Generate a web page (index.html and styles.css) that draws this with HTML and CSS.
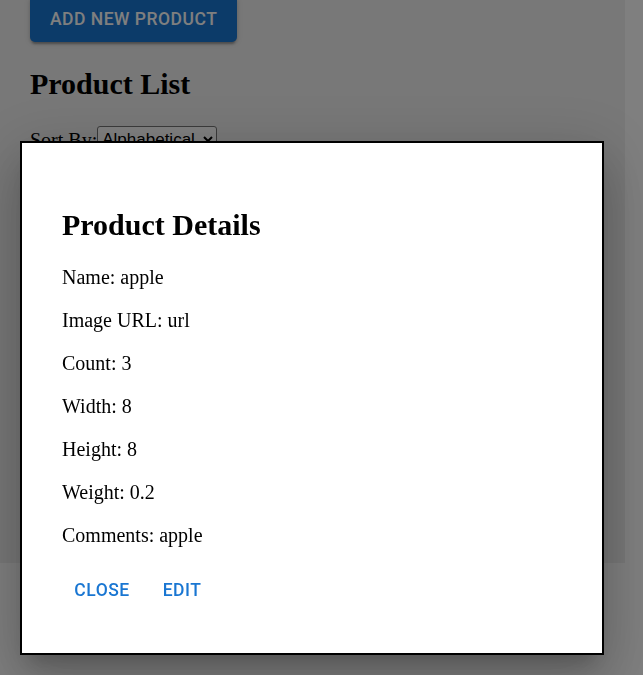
FILE: index.html
```html
<!DOCTYPE html>
<html lang="en">
<head>
<meta charset="utf-8">
<title>Products</title>
<link rel="stylesheet" href="styles.css">
</head>
<body>
  <div class="app">
    <div class="toolbar">
      <button class="btn-contained">Add New Product</button>
    </div>
    <h2 class="title">Product List</h2>
    <div class="sort">
      <label class="sort-label" for="sort">Sort By:</label><select id="sort" class="sort-select"><option>Alphabetical</option><option>Count</option></select>
    </div>
  </div>

  <div class="backdrop"></div>
  <div class="modal">
    <h2 class="modal-title">Product Details</h2>
    <p class="field">Name: apple</p>
    <p class="field">Image URL: url</p>
    <p class="field">Count: 3</p>
    <p class="field">Width: 8</p>
    <p class="field">Height: 8</p>
    <p class="field">Weight: 0.2</p>
    <p class="field">Comments: apple</p>
    <div class="actions">
      <button class="btn-text">Close</button>
      <button class="btn-text">Edit</button>
    </div>
  </div>
</body>
</html>
```

FILE: styles.css
```css
html, body {
  margin: 0;
  padding: 0;
  background: #ffffff;
}

body {
  font-family: "Liberation Serif", "Times New Roman", serif;
  font-size: 20px;
  color: #000;
  overflow: hidden;
  height: 675px;
}

.app {
  width: 625px;
  height: 563px;
  box-sizing: border-box;
  padding: 0 30px;
  background: #f0f0f0;
  overflow: hidden;
}

.toolbar {
  display: flex;
  margin-top: -4px;
}

.btn-contained {
  display: inline-flex;
  align-items: center;
  justify-content: center;
  box-sizing: border-box;
  height: 45.6px;
  padding: 0 20px;
  border: 0;
  border-radius: 5px;
  background: #1976d2;
  color: #fff;
  font-family: Roboto, "Liberation Sans", sans-serif;
  font-weight: 500;
  font-size: 17.5px;
  letter-spacing: 0.5px;
  text-transform: uppercase;
  box-shadow: 0 4px 2px -2px rgba(0,0,0,0.2), 0 2px 3px 0 rgba(0,0,0,0.14), 0 1px 6px 0 rgba(0,0,0,0.12);
}

.title {
  font-size: 30px;
  font-weight: bold;
  margin: 25px 0;
}

.sort {
  display: flex;
  align-items: flex-start;
}

.sort-label {
  line-height: 23px;
  margin-top: 3px;
}

.sort-select {
  font-family: "Liberation Sans", Arial, sans-serif;
  font-size: 17px;
  height: 27px;
  width: 120px;
  margin: 0;
  border: 1px solid #767676;
  border-radius: 3px;
  background: #fff;
  color: #000;
}

.backdrop {
  position: fixed;
  inset: 0;
  background: rgba(0, 0, 0, 0.5);
}

.modal {
  position: fixed;
  left: 20px;
  top: 141px;
  width: 584px;
  box-sizing: border-box;
  padding: 40px;
  background: #fff;
  border: 2px solid #000;
  box-shadow: 0 14px 19px -9px rgba(0,0,0,0.2), 0 30px 48px 4px rgba(0,0,0,0.14), 0 11px 58px 10px rgba(0,0,0,0.12);
}

.modal-title {
  font-size: 30px;
  font-weight: bold;
  margin: 25px 0 24px;
}

.field {
  margin: 20px 0;
  line-height: normal;
}

.actions {
  display: flex;
}

.btn-text {
  display: inline-flex;
  align-items: center;
  justify-content: center;
  box-sizing: border-box;
  min-width: 80px;
  height: 45.6px;
  padding: 0 10px;
  border: 0;
  background: transparent;
  color: #1976d2;
  font-family: Roboto, "Liberation Sans", sans-serif;
  font-weight: 500;
  font-size: 17.5px;
  letter-spacing: 0.5px;
  text-transform: uppercase;
}
```
